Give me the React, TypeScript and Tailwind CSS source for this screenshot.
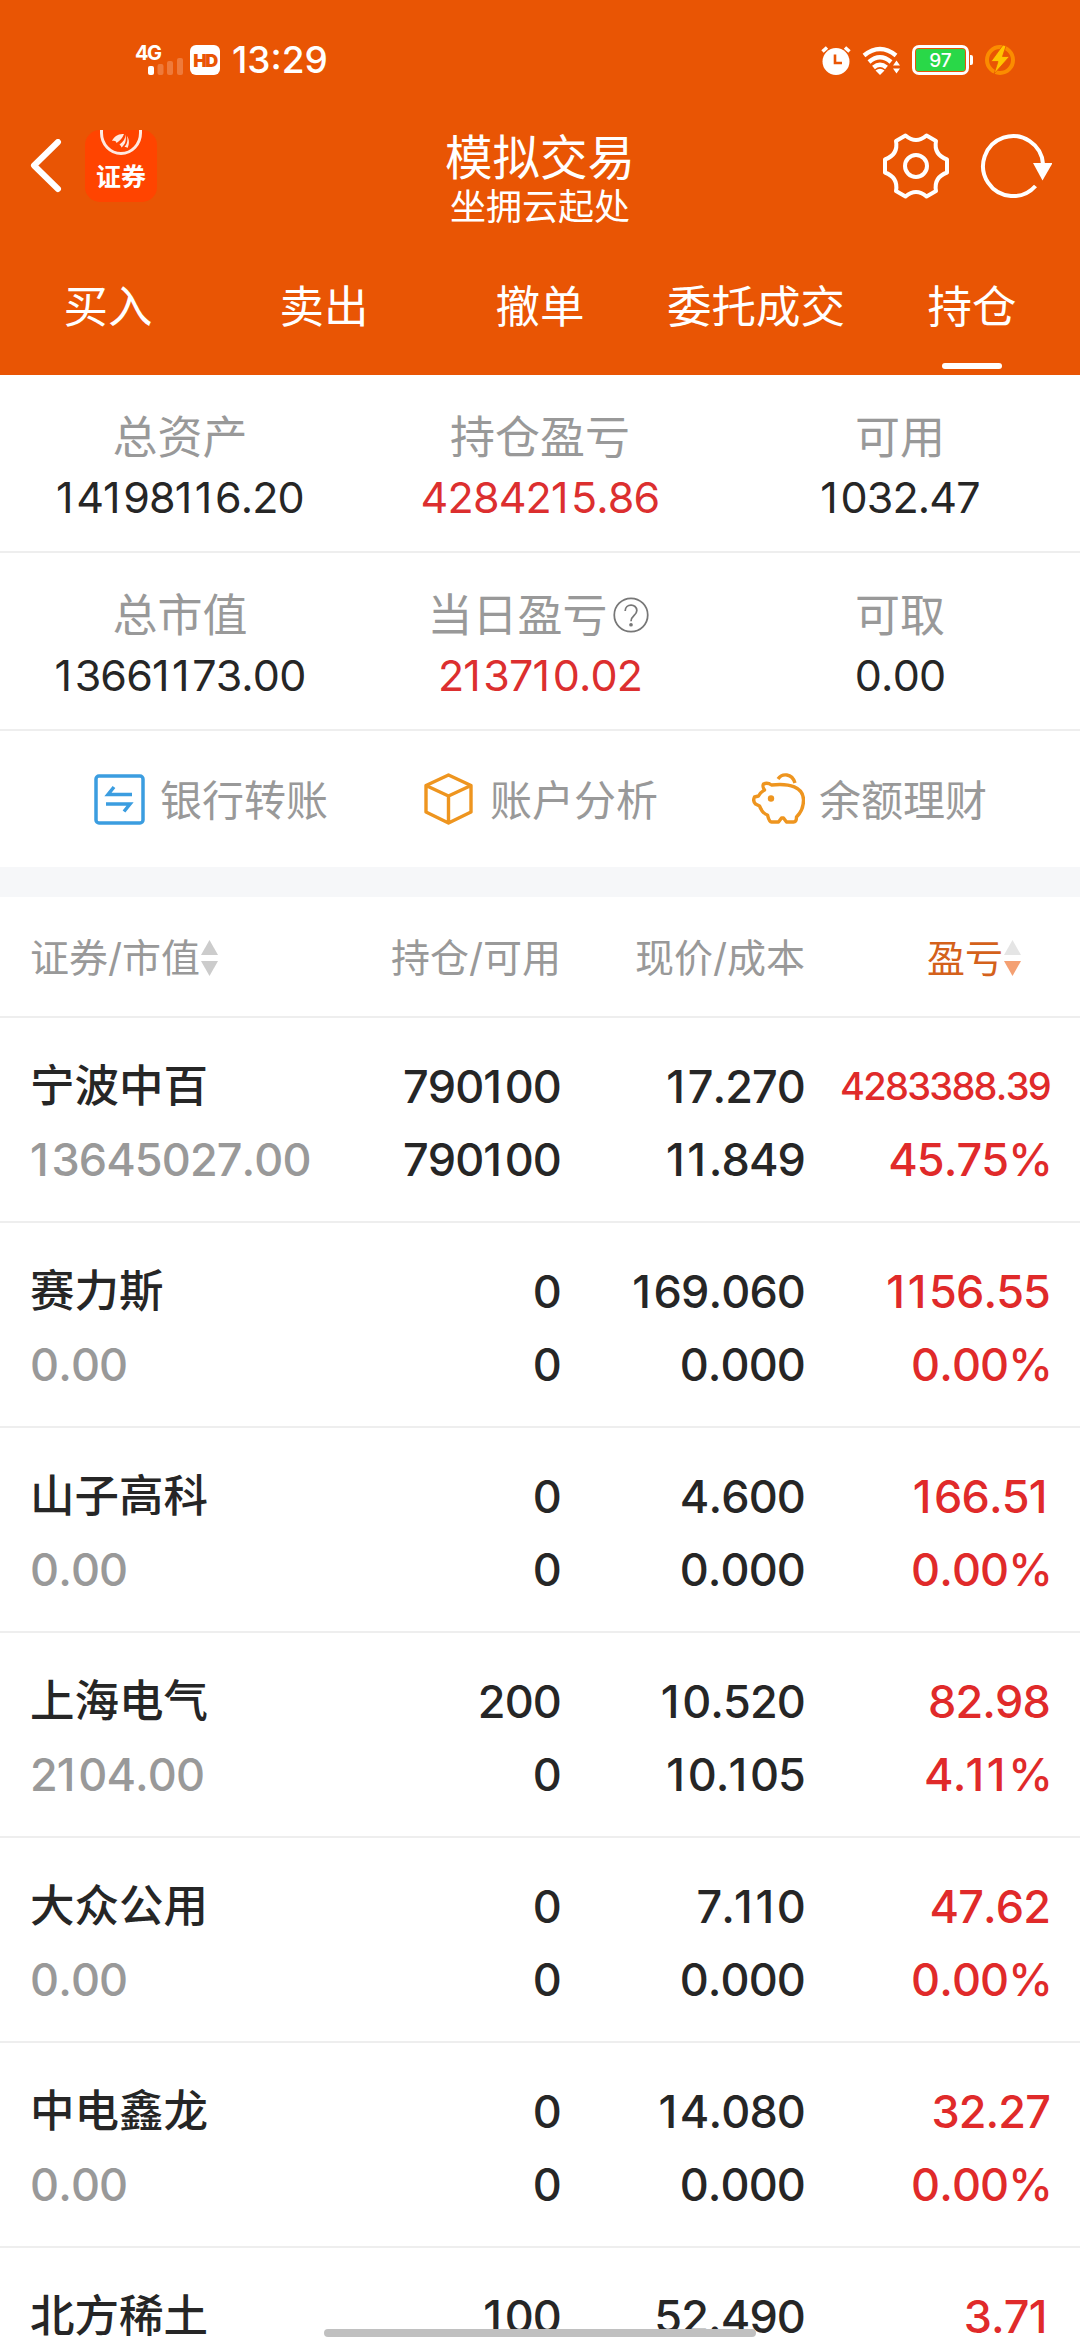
import React from 'react';

interface Holding {
  name: string;
  marketValue: string;
  position: string;
  available: string;
  price: string;
  cost: string;
  profit: string;
  percent: string;
}

const tabs = ['买入', '卖出', '撤单', '委托成交', '持仓'];

const holdings: Holding[] = [
  { name: '宁波中百', marketValue: '13645027.00', position: '790100', available: '790100', price: '17.270', cost: '11.849', profit: '4283388.39', percent: '45.75%' },
  { name: '赛力斯', marketValue: '0.00', position: '0', available: '0', price: '169.060', cost: '0.000', profit: '1156.55', percent: '0.00%' },
  { name: '山子高科', marketValue: '0.00', position: '0', available: '0', price: '4.600', cost: '0.000', profit: '166.51', percent: '0.00%' },
  { name: '上海电气', marketValue: '2104.00', position: '200', available: '0', price: '10.520', cost: '10.105', profit: '82.98', percent: '4.11%' },
  { name: '大众公用', marketValue: '0.00', position: '0', available: '0', price: '7.110', cost: '0.000', profit: '47.62', percent: '0.00%' },
  { name: '中电鑫龙', marketValue: '0.00', position: '0', available: '0', price: '14.080', cost: '0.000', profit: '32.27', percent: '0.00%' },
  { name: '北方稀土', marketValue: '0.00', position: '100', available: '0', price: '52.490', cost: '0.000', profit: '3.71', percent: '0.00%' },
];

const StatusBar: React.FC = () => (
  <div className="flex h-[120px] items-center justify-between pl-[134px] pr-[65px]">
    <div className="flex items-center">
      <div className="relative h-[34px] w-[50px]">
        <span className="absolute left-[1px] top-0 text-[20px] leading-[20px] font-bold tracking-[-1.5px]">4G</span>
        <svg className="absolute left-[14px] top-[14px]" width="36" height="20" viewBox="0 0 36 20" fill="#fff">
          <rect x="0" y="9" width="6" height="9" rx="2" />
          <rect x="9.500" y="7" width="6" height="11" rx="2" opacity=".22" />
          <rect x="19" y="4" width="6" height="14" rx="2" opacity=".22" />
          <rect x="29" y="1" width="6" height="17" rx="2" opacity=".22" />
        </svg>
      </div>
      <div className="ml-[6px] flex h-[30px] w-[30px] items-center justify-center rounded-[6px] bg-white text-[18px] font-black tracking-[-1.5px] text-[#e95504]">HD</div>
      <span className="ml-[12px] text-[37px] leading-[40px] font-medium">13:29</span>
    </div>
    <div className="flex items-center">
      <svg width="30" height="30" viewBox="0 0 30 30">
        <circle cx="15" cy="16.500" r="13.500" fill="#fff" />
        <path d="M1.500 6.500L6 2.500M28.500 6.500L24 2.500" stroke="#fff" strokeWidth="3.500" />
        <path d="M14 9.500V18h7" fill="none" stroke="#e95504" strokeWidth="2.600" />
      </svg>
      <svg className="ml-[11px]" width="39" height="30" viewBox="0 0 39 30" fill="none" stroke="#fff" strokeWidth="4.400">
        <path d="M2 10.500Q18 -2.500 34 10.500" />
        <path d="M7 17Q18 7.500 29 17" />
        <path d="M11.500 22.500Q18 17 24.500 22.500" />
        <path d="M13.500 25.500Q18 22 22.500 25.500L18 30z" fill="#fff" stroke="none" />
        <path d="M31 20.500l3.500-5 3.500 5zM31 23.500l3.500 5 3.500-5z" fill="#fff" stroke="none" />
      </svg>
      <div className="ml-[11px] flex h-[30px] w-[57px] items-center justify-center rounded-[7px] border-[3px] border-white p-[1px]">
        <div className="flex h-full w-full items-center justify-center rounded-[2px] bg-[#29d848] text-[19px] leading-none font-medium">97</div>
      </div>
      <div className="ml-[1px] h-[10px] w-[3px] rounded-r-[2px] bg-white" />
      <svg className="ml-[12px]" width="30" height="30" viewBox="0 0 30 30">
        <circle cx="15" cy="15" r="13" fill="none" stroke="#fb8c00" strokeWidth="4" />
        <path d="M18 0L6 16.500h7L9 29 24.500 11.500H17.500L21 1z" fill="#ffc400" stroke="#e95504" strokeWidth=".8" />
      </svg>
    </div>
  </div>
);

const Header: React.FC = () => (
  <header className="h-[375px] shrink-0 bg-[#e95504] text-white">
    <StatusBar />
    <div className="grid h-[120px] grid-cols-[1fr_auto_1fr] items-start">
      <div className="flex items-center pl-[30px] pt-[10px]">
        <svg width="32" height="54" viewBox="0 0 32 54" fill="none" stroke="#fff" strokeWidth="6" strokeLinecap="round" strokeLinejoin="round">
          <path d="M28 3L4 26.500 28 50" />
        </svg>
        <div className="relative ml-[23px] h-[72px] w-[72px] overflow-hidden rounded-[15px] bg-[#ff4400]">
          <svg width="72" height="34" viewBox="0 0 72 34" fill="none" stroke="#ffe9e0" strokeWidth="3">
            <path d="M16.500 0V3A19.500 20.500 0 0 0 55.500 3V0" />
            <path d="M39 4c-6-.5-10 2.500-12 7 3-.5 4 0 4.500 2 4-3 6-5 7.500-9zM40.500 4.500c0 4-2 7-6 10 1 1 1.500 1.500 2 3 4-3.500 5-7 4-13zM42 6c1 5 0 8-2.500 11 1.500 0 2.300.3 3 1C44.500 14 44.500 9.500 42 6z" fill="#ffe9e0" stroke="none" />
          </svg>
          <span className="absolute left-[11px] top-[33px] text-[25px] leading-[28px] font-bold">证券</span>
        </div>
      </div>
      <div className="flex flex-col items-center pt-[13px]">
        <h1 className="text-[47.500px] leading-[50px]">模拟交易</h1>
        <p className="text-[36px] leading-[49px]">坐拥云起处</p>
      </div>
      <div className="flex items-start justify-end pr-[28px] pt-[12px]">
        <svg width="68" height="68" viewBox="-34 -34 68 68" fill="none" stroke="#fff" strokeWidth="4" strokeLinejoin="round">
          <path d="M-10.500 -30.500Q0 -21.500 10.500 -30.500L20 -25Q17.500 -11.500 31 -6.500V6.500Q17.500 11.500 20 25L10.500 30.500Q0 21.500 -10.500 30.500L-20 25Q-17.500 11.500 -31 6.500V-6.500Q-17.500 -11.500 -20 -25z" />
          <circle r="11" />
        </svg>
        <svg className="ml-[29px]" width="73" height="68" viewBox="-34 -34 73 68" fill="none" stroke="#fff" strokeWidth="4">
          <path d="M30 -2A30 30 0 1 0 22.500 20" />
          <path d="M20 -3H39.500L29.500 14.500z" fill="#fff" stroke="none" />
        </svg>
      </div>
    </div>
    <nav className="grid h-[135px] grid-cols-5">
      {tabs.map((tab) => (
        <div key={tab} className="flex flex-col items-center pt-[36px] text-[44.500px] leading-[63px]">
          <span className="whitespace-nowrap">{tab}</span>
          {tab === '持仓' && <div className="mt-[24px] h-[6px] w-[60px] rounded-full bg-white" />}
        </div>
      ))}
    </nav>
  </header>
);

// Gives the narrow "1" a little air so that figures line up better
const Num: React.FC<{ value: string; tight?: boolean }> = ({ value, tight }) => (
  <span className={`[font-kerning:none] ${tight ? 'tracking-[-0.045em]' : 'tracking-[-0.02em]'}`}>
    {value.split('').map((char, i) => (
      <span key={i} className={char === '1' ? 'pr-[0.08em]' : ''}>{char}</span>
    ))}
  </span>
);

interface StatProps {
  label: string;
  value: string;
  red?: boolean;
  help?: boolean;
}

const Stat: React.FC<StatProps> = ({ label, value, red, help }) => (
  <div className="flex flex-col items-center pt-[33px]">
    <div className="flex h-[60px] items-center text-[45px] leading-[60px] text-[#999]">
      {label}
      {help && (
        <svg className="ml-[5px] mr-[4px] -mt-[3px]" width="36" height="36" viewBox="0 0 37 37" fill="none" stroke="#777" strokeWidth="1.800">
          <circle cx="18.500" cy="18.500" r="17.200" />
          <path d="M12.500 14.500c0-8 12-8 12-.5 0 5-6 5-6 11" />
          <circle cx="18.500" cy="28.500" r="1" fill="#777" />
        </svg>
      )}
    </div>
    <div className={`-mt-px text-[43px] leading-[60px] ${red ? 'text-[#dc2f2f]' : 'text-[#262626]'}`}>
      <Num value={value} />
    </div>
  </div>
);

const Summary: React.FC = () => (
  <section className="shrink-0">
    <div className="grid h-[178px] grid-cols-3 border-b-2 border-[#eee]">
      <Stat label="总资产" value="14198116.20" />
      <Stat label="持仓盈亏" value="4284215.86" red />
      <Stat label="可用" value="1032.47" />
    </div>
    <div className="grid h-[178px] grid-cols-3 border-b-2 border-[#eee]">
      <Stat label="总市值" value="13661173.00" />
      <Stat label="当日盈亏" value="213710.02" red help />
      <Stat label="可取" value="0.00" />
    </div>
  </section>
);

const Actions: React.FC = () => (
  <section className="flex h-[136px] shrink-0 items-center pl-[94px] text-[42px] text-[#999]">
    <div className="flex w-[330px] items-center">
      <svg width="51" height="51" viewBox="0 0 51 51" fill="none" stroke="#3b9de0" strokeWidth="3.500">
        <rect x="2" y="2" width="47" height="47" rx="3" />
        <path d="M38 20.500H14L20 13M12 30H36L30 37.500" />
      </svg>
      <span className="ml-[15px] pt-[3px]">银行转账</span>
    </div>
    <div className="flex w-[328px] items-center">
      <svg width="50" height="52" viewBox="0 0 50 52" fill="none" stroke="#ee951f" strokeWidth="3.400" strokeLinejoin="round">
        <path d="M24.500 2L47 12.500V39L24.500 50 2 39V12.500zM2 12.500L24.500 23 47 12.500M24.500 23V50" />
      </svg>
      <span className="ml-[16px] pt-[3px]">账户分析</span>
    </div>
    <div className="flex items-center">
      <svg width="53" height="52" viewBox="-1.500 0 53 52" fill="none" stroke="#ee951f" strokeWidth="3.400" strokeLinejoin="round">
        <path d="M10 11q4-2 8 1c18-2 32 2 32 15 0 8-3 13-7 17 0 3-1 5-3 5h-7l-3-4h-2l-3 4h-7c-2 0-3-3-4-7-3-1-6-4-8-9l-4-2c-2-2-2-5-1-7l4-1c1-3 3-4 6-6-2-3-2-4-1-6z" />
        <path d="M24.500 6c4-6 14-6 17 4" />
        <circle cx="17.500" cy="25.500" r="3.200" fill="#ee951f" stroke="none" />
      </svg>
      <span className="ml-[14px] pt-[3px]">余额理财</span>
    </div>
  </section>
);

interface SortIconProps {
  up: string;
  down: string;
}

const SortIcon: React.FC<SortIconProps> = ({ up, down }) => (
  <svg className="ml-px" width="17" height="36" viewBox="0 0 18 36" preserveAspectRatio="none">
    <path d="M9 0L18 15H0z" fill={up} />
    <path d="M9 36L18 21H0z" fill={down} />
  </svg>
);

const columns = 'grid grid-cols-[300px_231px_244px_245px] px-[30px]';

const HoldingRow: React.FC<{ item: Holding }> = ({ item }) => (
  <div className={`${columns} h-[205px] shrink-0 border-b-2 border-[#eee] pt-[32px] text-right text-[45px] leading-[73px] font-medium text-[#262626]`}>
    <div className="text-left">
      <div className="text-[44.500px]">{item.name}</div>
      <div className="text-[#999]"><Num value={item.marketValue} /></div>
    </div>
    <div>
      <div><Num value={item.position} /></div>
      <div><Num value={item.available} /></div>
    </div>
    <div>
      <div><Num value={item.price} /></div>
      <div><Num value={item.cost} /></div>
    </div>
    <div className="text-[#e02a2a]">
      {item.profit.length > 9 ? (
        <div className="text-[38px]"><Num value={item.profit} tight /></div>
      ) : (
        <div><Num value={item.profit} /></div>
      )}
      <div className="-mr-[2px]"><Num value={item.percent} /></div>
    </div>
  </div>
);

const App: React.FC = () => {
  return (
    <div className="relative flex h-[2340px] w-[1080px] flex-col overflow-hidden bg-white font-[Inter,'Noto_Sans_CJK_SC',sans-serif]">
      <Header />
      <Summary />
      <Actions />
      <div className="h-[30px] shrink-0 bg-[#f6f7f9]" />
      <div className={`${columns} h-[121px] shrink-0 items-center border-b-2 border-[#eee] pt-[3px] text-right text-[39px] text-[#999]`}>
        <div className="flex items-center">
          证券/市值
          <SortIcon up="#ccc" down="#ccc" />
        </div>
        <div>持仓/可用</div>
        <div>现价/成本</div>
        <div className="flex items-center justify-end pr-[29px] text-[38px] text-[#d4611b]">
          盈亏
          <SortIcon up="#e5e5e5" down="#f4a072" />
        </div>
      </div>
      {holdings.map((item) => (
        <HoldingRow key={item.name} item={item} />
      ))}
      <div className="absolute bottom-[3px] left-[324px] h-[8px] w-[432px] rounded-full bg-[#c0c0c0]" />
    </div>
  );
};

export default App;
